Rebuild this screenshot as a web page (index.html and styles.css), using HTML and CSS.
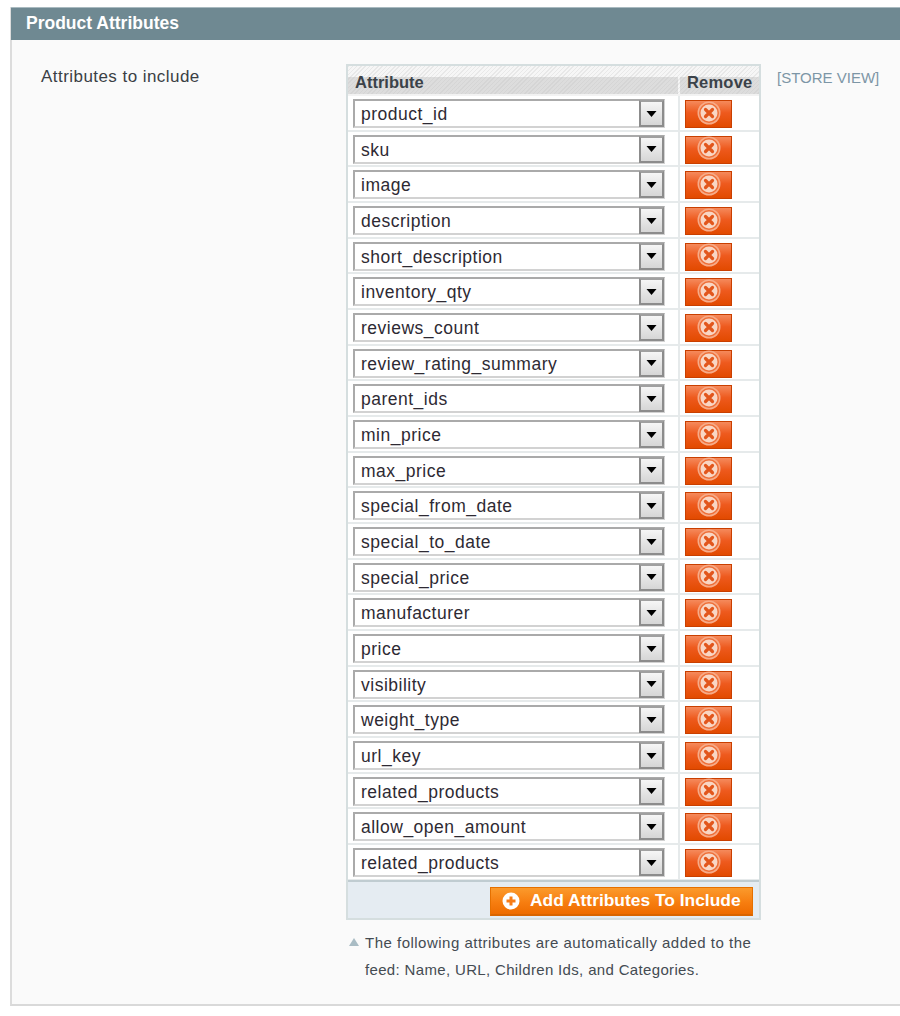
FILE: index.html
```html
<!DOCTYPE html>
<html lang="en">
<head>
<meta charset="utf-8">
<title>Product Attributes</title>
<link rel="stylesheet" href="styles.css">
</head>
<body>
<svg class="defs" width="0" height="0" aria-hidden="true">
  <symbol id="x" viewBox="0 0 24 24">
    <circle cx="12" cy="12" r="11.500" fill="#f7ab88"/>
    <circle cx="12" cy="12" r="10" fill="#ee6f38"/>
    <circle cx="12" cy="12" r="8.500" fill="#f9d6c4"/>
    <path d="M8.500 8.500l7 7M15.500 8.500l-7 7" stroke="#e2561c" stroke-width="3.200" stroke-linecap="round"/>
  </symbol>
  <symbol id="arrow" viewBox="0 0 10 6"><path d="M0 0h10L5 6z" fill="#000"/></symbol>
</svg>
<section class="panel">
  <h2 class="head">Product Attributes</h2>
  <div class="form">
    <div class="label">Attributes to include</div>
    <div class="value">
      <div class="table">
        <div class="thead"><div class="th th-a">Attribute</div><div class="th th-r">Remove</div></div>
        <div class="row"><div class="c-a"><div class="sel"><span class="t">product_id</span><span class="btn"><svg><use href="#arrow"/></svg></span></div></div><div class="c-r"><span class="rm"><svg><use href="#x"/></svg></span></div></div>
        <div class="row"><div class="c-a"><div class="sel"><span class="t">sku</span><span class="btn"><svg><use href="#arrow"/></svg></span></div></div><div class="c-r"><span class="rm"><svg><use href="#x"/></svg></span></div></div>
        <div class="row"><div class="c-a"><div class="sel"><span class="t">image</span><span class="btn"><svg><use href="#arrow"/></svg></span></div></div><div class="c-r"><span class="rm"><svg><use href="#x"/></svg></span></div></div>
        <div class="row"><div class="c-a"><div class="sel"><span class="t">description</span><span class="btn"><svg><use href="#arrow"/></svg></span></div></div><div class="c-r"><span class="rm"><svg><use href="#x"/></svg></span></div></div>
        <div class="row"><div class="c-a"><div class="sel"><span class="t">short_description</span><span class="btn"><svg><use href="#arrow"/></svg></span></div></div><div class="c-r"><span class="rm"><svg><use href="#x"/></svg></span></div></div>
        <div class="row"><div class="c-a"><div class="sel"><span class="t">inventory_qty</span><span class="btn"><svg><use href="#arrow"/></svg></span></div></div><div class="c-r"><span class="rm"><svg><use href="#x"/></svg></span></div></div>
        <div class="row"><div class="c-a"><div class="sel"><span class="t">reviews_count</span><span class="btn"><svg><use href="#arrow"/></svg></span></div></div><div class="c-r"><span class="rm"><svg><use href="#x"/></svg></span></div></div>
        <div class="row"><div class="c-a"><div class="sel"><span class="t">review_rating_summary</span><span class="btn"><svg><use href="#arrow"/></svg></span></div></div><div class="c-r"><span class="rm"><svg><use href="#x"/></svg></span></div></div>
        <div class="row"><div class="c-a"><div class="sel"><span class="t">parent_ids</span><span class="btn"><svg><use href="#arrow"/></svg></span></div></div><div class="c-r"><span class="rm"><svg><use href="#x"/></svg></span></div></div>
        <div class="row"><div class="c-a"><div class="sel"><span class="t">min_price</span><span class="btn"><svg><use href="#arrow"/></svg></span></div></div><div class="c-r"><span class="rm"><svg><use href="#x"/></svg></span></div></div>
        <div class="row"><div class="c-a"><div class="sel"><span class="t">max_price</span><span class="btn"><svg><use href="#arrow"/></svg></span></div></div><div class="c-r"><span class="rm"><svg><use href="#x"/></svg></span></div></div>
        <div class="row"><div class="c-a"><div class="sel"><span class="t">special_from_date</span><span class="btn"><svg><use href="#arrow"/></svg></span></div></div><div class="c-r"><span class="rm"><svg><use href="#x"/></svg></span></div></div>
        <div class="row"><div class="c-a"><div class="sel"><span class="t">special_to_date</span><span class="btn"><svg><use href="#arrow"/></svg></span></div></div><div class="c-r"><span class="rm"><svg><use href="#x"/></svg></span></div></div>
        <div class="row"><div class="c-a"><div class="sel"><span class="t">special_price</span><span class="btn"><svg><use href="#arrow"/></svg></span></div></div><div class="c-r"><span class="rm"><svg><use href="#x"/></svg></span></div></div>
        <div class="row"><div class="c-a"><div class="sel"><span class="t">manufacturer</span><span class="btn"><svg><use href="#arrow"/></svg></span></div></div><div class="c-r"><span class="rm"><svg><use href="#x"/></svg></span></div></div>
        <div class="row"><div class="c-a"><div class="sel"><span class="t">price</span><span class="btn"><svg><use href="#arrow"/></svg></span></div></div><div class="c-r"><span class="rm"><svg><use href="#x"/></svg></span></div></div>
        <div class="row"><div class="c-a"><div class="sel"><span class="t">visibility</span><span class="btn"><svg><use href="#arrow"/></svg></span></div></div><div class="c-r"><span class="rm"><svg><use href="#x"/></svg></span></div></div>
        <div class="row"><div class="c-a"><div class="sel"><span class="t">weight_type</span><span class="btn"><svg><use href="#arrow"/></svg></span></div></div><div class="c-r"><span class="rm"><svg><use href="#x"/></svg></span></div></div>
        <div class="row"><div class="c-a"><div class="sel"><span class="t">url_key</span><span class="btn"><svg><use href="#arrow"/></svg></span></div></div><div class="c-r"><span class="rm"><svg><use href="#x"/></svg></span></div></div>
        <div class="row"><div class="c-a"><div class="sel"><span class="t">related_products</span><span class="btn"><svg><use href="#arrow"/></svg></span></div></div><div class="c-r"><span class="rm"><svg><use href="#x"/></svg></span></div></div>
        <div class="row"><div class="c-a"><div class="sel"><span class="t">allow_open_amount</span><span class="btn"><svg><use href="#arrow"/></svg></span></div></div><div class="c-r"><span class="rm"><svg><use href="#x"/></svg></span></div></div>
        <div class="row"><div class="c-a"><div class="sel"><span class="t">related_products</span><span class="btn"><svg><use href="#arrow"/></svg></span></div></div><div class="c-r"><span class="rm"><svg><use href="#x"/></svg></span></div></div>
        <div class="tfoot">
          <span class="add">
            <svg class="plus" viewBox="0 0 18 18"><circle cx="9" cy="9" r="8.500" fill="#fff"/><path d="M9 4.500v9M4.500 9h9" stroke="#f77c16" stroke-width="3"/></svg>
            <span>Add Attributes To Include</span>
          </span>
        </div>
      </div>
      <div class="note">
        <svg class="tri" viewBox="0 0 10 8"><path d="M5 0l5 8H0z" fill="#a9bcc4"/></svg>
        <p>The following attributes are automatically added to the<br><span class="l2">feed: Name, URL, Children Ids, and Categories.</span></p>
      </div>
    </div>
    <div class="scope">[STORE VIEW]</div>
  </div>
</section>
</body>
</html>
```
FILE: styles.css
```css
* { box-sizing: border-box; }
html, body { margin: 0; height: 100%; }
body {
  background: #fff;
  font-family: "Liberation Sans", Arial, sans-serif;
  color: #2f2f2f;
  padding: 7px 0 0 10px;
  overflow: hidden;
}
.defs { position: absolute; }
.panel {
  height: 999px;
  background: #fafafa;
  border-left: 2px solid #dcdcdc;
  border-bottom: 2px solid #d9d9d9;
}
.head {
  margin: 0 0 0 -1px;
  height: 33px;
  background: #6f8992;
  border-top: 1px solid #a9bac0;
  color: #fff;
  font-size: 17.500px;
  font-weight: bold;
  line-height: 30px;
  padding-left: 15px;
}
.form { display: flex; align-items: flex-start; padding-top: 24px; }
.label {
  width: 334px;
  padding: 3px 0 0 29px;
  font-size: 17px;
  line-height: 20px;
  letter-spacing: .45px;
  color: #3a3f45;
}
.value { width: 415px; }
.table {
  border: 2px solid #d5dedf;
  background: #fff;
}
.thead {
  display: flex;
  height: 30px;
  border-bottom: 2px solid #f2f2f2;
  background: repeating-linear-gradient(135deg, #e8e8e8 0 1px, #f6f6f6 1px 3px);
}
.th {
  font-weight: bold;
  font-size: 16.500px;
  line-height: 19px;
  padding-top: 7px;
  color: #3b4249;
  background: linear-gradient(to bottom, transparent 0 11px, rgba(190,190,190,.45) 11px);
}
.th-a { width: 330px; padding-left: 7px; }
.th-r { flex: 1; margin-left: 2px; padding-left: 7px; letter-spacing: .2px; }
.row {
  display: flex;
  height: 35.680px;
  border-bottom: 2px solid #e6eaeb;
}
.c-a { width: 330px; padding: 3px 0 0 5px; }
.c-r { flex: 1; border-left: 2px solid #e6eaeb; padding: 3px 0 0 5px; }
.sel {
  display: flex;
  width: 312px;
  height: 29px;
  border: 2px solid #aaa;
  border-bottom-color: #d2d2d2;
  border-right-color: #d2d2d2;
  background: #fff;
}
.t {
  flex: 1;
  padding-left: 6px;
  font-size: 17.500px;
  line-height: 26px;
  color: #2e2a33;
  letter-spacing: .5px;
}
.btn {
  display: flex;
  align-items: center;
  justify-content: center;
  width: 25px;
  margin: -1px -1px -1px 0;
  border: 2px solid #8c8c8c;
  border-top-color: #a0a0a0;
  background: linear-gradient(#f6f6f6, #d6d6d6);
}
.btn svg { width: 11px; height: 6px; }
.rm {
  display: flex;
  align-items: center;
  justify-content: center;
  width: 47px;
  height: 28px;
  margin-top: 1px;
  border: 1px solid #c93f00;
  background: linear-gradient(#f58a5c, #ee5a1e 45%, #e24a00);
}
.rm svg { width: 24px; height: 24px; margin-top: -3px; }
.tfoot {
  display: flex;
  justify-content: flex-end;
  height: 38px;
  padding: 5px 6px 0 0;
  background: #e5ecf2;
  border-top: 2px solid #c0ccd1;
  margin-top: -1px;
}
.add {
  display: flex;
  align-items: center;
  gap: 10px;
  width: 263px;
  height: 29px;
  padding-left: 11px;
  background: linear-gradient(#fb9a2c, #f77e10 55%, #ee6c00);
  border: 1px solid #e57000;
  border-bottom: 2px solid #d96500;
  color: #fff;
  font-weight: bold;
  font-size: 17.400px;
}
.plus { width: 18px; height: 18px; flex: none; }
.note {
  position: relative;
  padding: 9px 0 0 19px;
  font-size: 15px;
  line-height: 27px;
  color: #444b52;
  letter-spacing: .49px;
}
.note p { margin: 0; white-space: nowrap; }
.l2 { letter-spacing: .34px; }
.tri { position: absolute; left: 3px; top: 18px; width: 10px; height: 8px; }
.scope {
  padding: 4px 0 0 16px;
  font-size: 15px;
  line-height: 20px;
  color: #7d96a6;
  white-space: nowrap;
}
```
